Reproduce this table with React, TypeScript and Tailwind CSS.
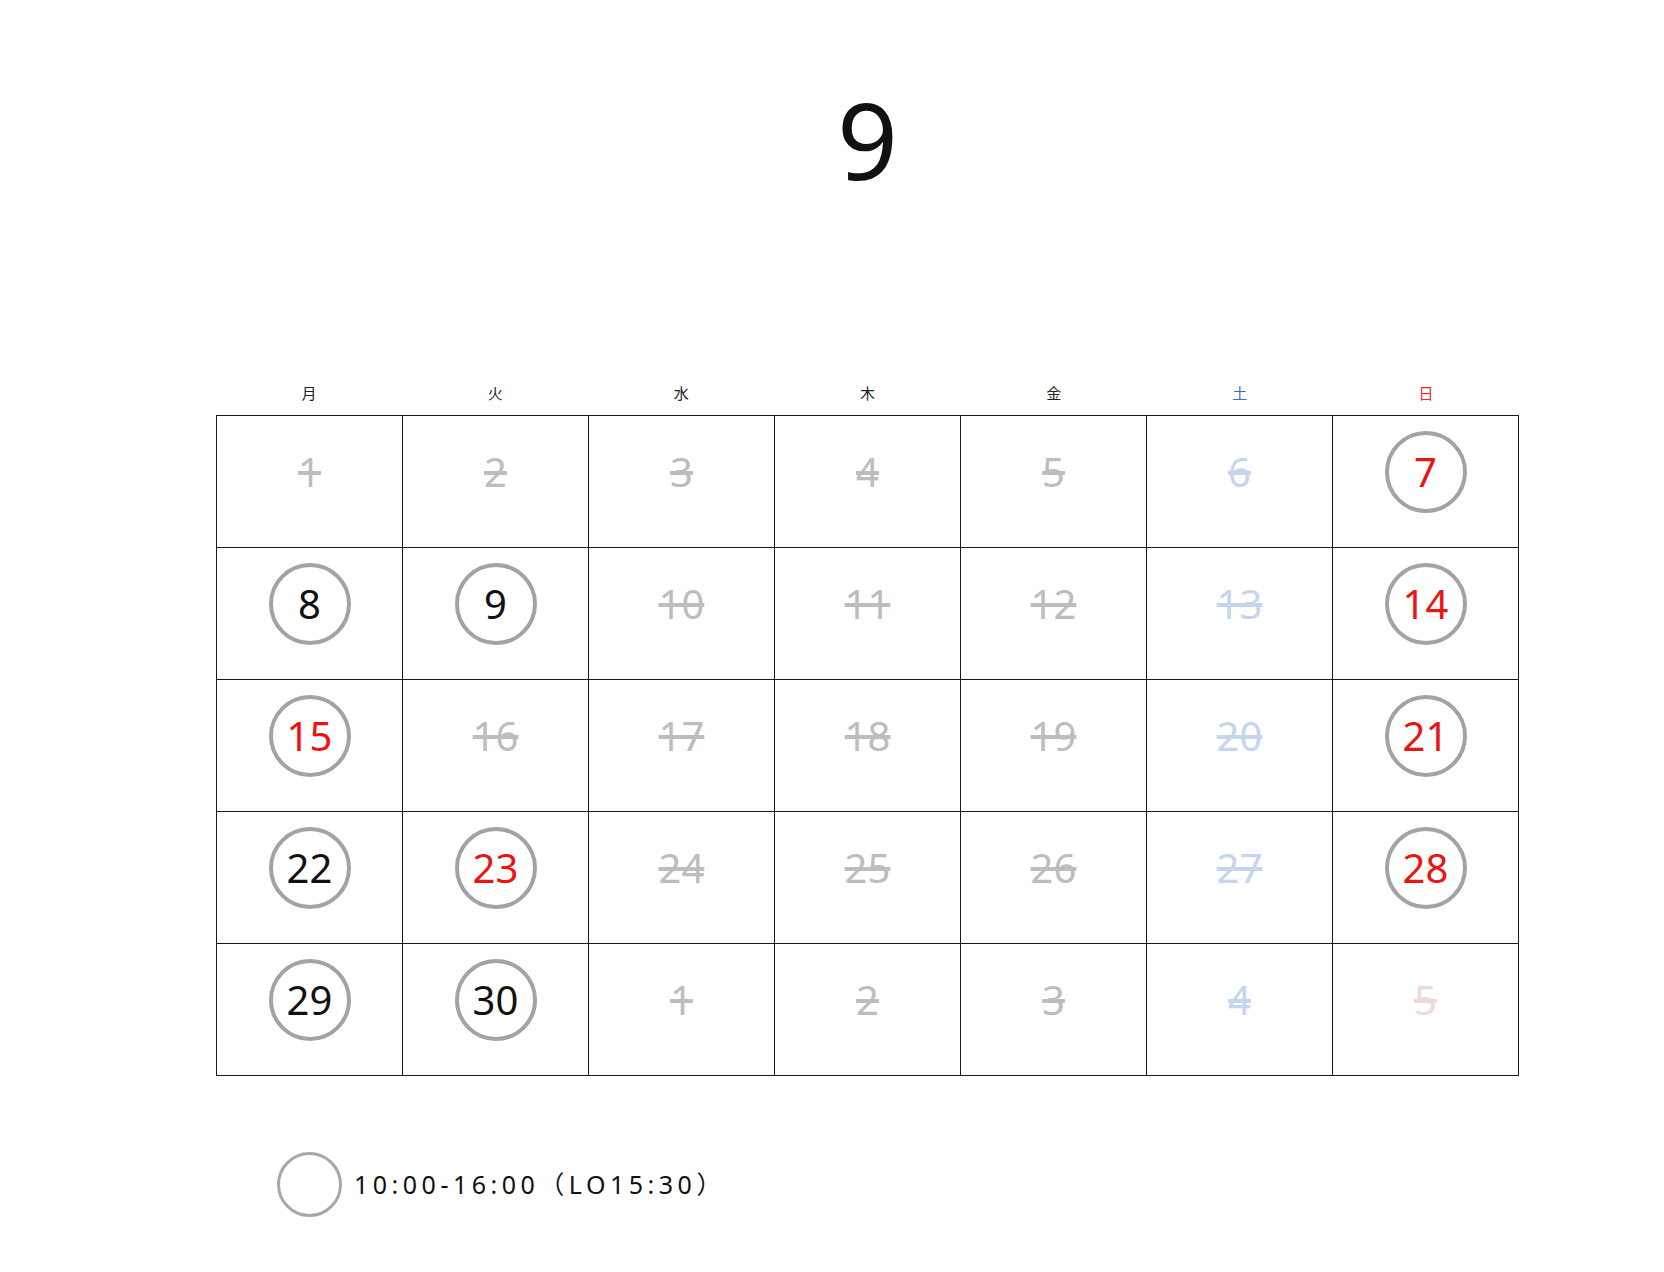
import React from 'react';

type Day = {
  n: number;
  open?: boolean;
  red?: boolean;
  tone?: 'gray' | 'blue' | 'pink';
};

const weekdays = [
  { label: '月', color: 'text-[#222]' },
  { label: '火', color: 'text-[#222]' },
  { label: '水', color: 'text-[#222]' },
  { label: '木', color: 'text-[#222]' },
  { label: '金', color: 'text-[#222]' },
  { label: '土', color: 'text-[#3a6fc6]' },
  { label: '日', color: 'text-[#ec2a2a]' },
];

const openDays = [7, 8, 9, 14, 15, 21, 22, 23, 28, 29, 30];
const redDays = [7, 14, 15, 21, 23, 28];

const days: Day[] = [];
for (let i = 1; i <= 30; i++) {
  const col = (i - 1) % 7;
  days.push({
    n: i,
    open: openDays.includes(i),
    red: redDays.includes(i),
    tone: col === 5 ? 'blue' : 'gray',
  });
}
// next month
days.push({ n: 1, tone: 'gray' });
days.push({ n: 2, tone: 'gray' });
days.push({ n: 3, tone: 'gray' });
days.push({ n: 4, tone: 'blue' });
days.push({ n: 5, tone: 'pink' });

const toneClass = {
  gray: 'text-[#bdbdbd]',
  blue: 'text-[#c5d5ee]',
  pink: 'text-[#eed8d8]',
};

const DayCell: React.FC<{ day: Day }> = ({ day }) => {
  return (
    <div className="h-[132px] border-b border-r border-[#1a1a1a] flex items-start justify-center pt-[15px]">
      {day.open ? (
        <div className="w-[82px] h-[82px] rounded-full border-[4px] border-[#a3a3a3] flex items-center justify-center">
          <span
            className={
              'text-[40px] leading-none ' + (day.red ? 'text-[#ea1410]' : 'text-[#111]')
            }
          >
            {day.n}
          </span>
        </div>
      ) : (
        <div className="w-[82px] h-[82px] flex items-center justify-center">
          <span className={'text-[40px] leading-none line-through ' + toneClass[day.tone || 'gray']}>
            {day.n}
          </span>
        </div>
      )}
    </div>
  );
};

export default function App() {
  return (
    <div
      className="min-h-[1272px] bg-white"
      style={{ fontFamily: '"Noto Sans", "Noto Sans CJK JP", sans-serif' }}
    >
      <div className="ml-[216px] w-[1303px]">
        {/* month title */}
        <div className="pt-[86px] text-center text-[106px] leading-none text-[#111]">9</div>

        {/* weekday labels */}
        <div className="grid grid-cols-7 mt-[194px]">
          {weekdays.map((w) => (
            <div key={w.label} className={'text-center text-[15px] leading-none pb-[14px] ' + w.color}>
              {w.label}
            </div>
          ))}
        </div>

        {/* calendar grid */}
        <div className="grid grid-cols-7 border-l border-t border-[#1a1a1a]">
          {days.map((d, i) => (
            <DayCell key={i} day={d} />
          ))}
        </div>

        {/* legend */}
        <div className="flex items-center mt-[76px] ml-[61px]">
          <div className="w-[65px] h-[65px] rounded-full border-[3px] border-[#a8a8a8]" />
          <span className="ml-[12px] text-[25px] tracking-[0.18em] text-[#111]">
            10:00-16:00（LO15:30）
          </span>
        </div>
      </div>
    </div>
  );
}
